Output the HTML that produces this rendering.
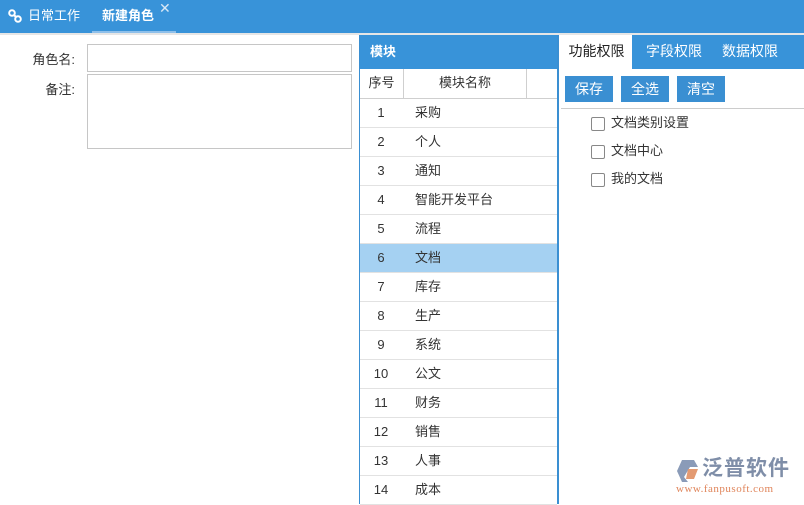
<!DOCTYPE html>
<html><head><meta charset="utf-8"><style>
*{margin:0;padding:0;box-sizing:border-box}
body{width:804px;height:504px;overflow:hidden;background:#fff;font-family:"Liberation Sans","Noto Sans CJK SC",sans-serif;font-size:13px;color:#333;position:relative}
.abs{position:absolute}
.top{left:0;top:0;width:804px;height:33px;background:#3893d9}
.tab{top:0;height:33px;line-height:31px;color:#fff;font-size:13px}
.lbl{width:60px;text-align:right;font-size:13px;color:#333}
.inp{border:1px solid #c6c6c6;background:#fff}
.mid{left:359px;top:35px;width:200px;height:469px;border-left:1px solid #3a8fd2;border-right:2px solid #3a8fd2}
.hdr{background:#3893d9;color:#fff;font-weight:bold;height:34px;line-height:34px}
.row{position:absolute;left:0;width:197px;height:29px;border-bottom:1px solid #e2e2e2;line-height:27px}
.row span{position:absolute}
.n{left:0;width:42px;text-align:center}
.m{left:55px}
.btn{top:76px;height:26px;width:48px;background:#3a8fd2;color:#fff;text-align:center;line-height:26px;font-size:14px}
.cb{left:591px;width:14px;height:14px;border:1px solid #888;border-radius:2px;background:#fff}
.ct{left:611px;font-size:13px;line-height:16px}
</style></head><body>
<div class="abs top"></div>
<svg class="abs" style="left:8px;top:9px" width="14" height="14" viewBox="0 0 14 14"><circle cx="4" cy="4" r="2.8" fill="none" stroke="#fff" stroke-width="2"/><circle cx="10" cy="10" r="2.8" fill="none" stroke="#fff" stroke-width="2"/><line x1="5.5" y1="5.5" x2="8.5" y2="8.5" stroke="#fff" stroke-width="2"/></svg>
<div class="abs tab" style="left:28px">日常工作</div>
<div class="abs tab" style="left:102px;font-weight:bold">新建角色</div>
<div class="abs" style="left:159px;top:1px;color:#d8e8f6;font-size:14px;line-height:14px">✕</div>
<div class="abs" style="left:92px;top:31px;width:84px;height:2px;background:#8fc0ea"></div>
<div class="abs" style="left:0;top:33px;width:804px;height:2px;background:#e6e6e6"></div>

<div class="abs lbl" style="left:15px;top:49px">角色名:</div>
<div class="abs inp" style="left:87px;top:44px;width:265px;height:28px"></div>
<div class="abs lbl" style="left:15px;top:79px">备注:</div>
<div class="abs inp" style="left:87px;top:74px;width:265px;height:75px"></div>

<div class="abs mid">
 <div class="hdr" style="padding-left:10px">模块</div>
 <div style="position:relative;height:30px;border-bottom:1px solid #cfcfcf;line-height:28px">
  <span class="abs" style="left:0;width:44px;text-align:center;border-right:1px solid #cfcfcf;height:29px">序号</span>
  <span class="abs" style="left:44px;width:123px;text-align:center;border-right:1px solid #cfcfcf;height:29px">模块名称</span>
 </div>
 <div style="position:relative">
  <div class="row" style="top:0"><span class="n">1</span><span class="m">采购</span></div>
  <div class="row" style="top:29px"><span class="n">2</span><span class="m">个人</span></div>
  <div class="row" style="top:58px"><span class="n">3</span><span class="m">通知</span></div>
  <div class="row" style="top:87px"><span class="n">4</span><span class="m">智能开发平台</span></div>
  <div class="row" style="top:116px"><span class="n">5</span><span class="m">流程</span></div>
  <div class="row" style="top:145px;background:#a5d1f2"><span class="n">6</span><span class="m">文档</span></div>
  <div class="row" style="top:174px"><span class="n">7</span><span class="m">库存</span></div>
  <div class="row" style="top:203px"><span class="n">8</span><span class="m">生产</span></div>
  <div class="row" style="top:232px"><span class="n">9</span><span class="m">系统</span></div>
  <div class="row" style="top:261px"><span class="n">10</span><span class="m">公文</span></div>
  <div class="row" style="top:290px"><span class="n">11</span><span class="m">财务</span></div>
  <div class="row" style="top:319px"><span class="n">12</span><span class="m">销售</span></div>
  <div class="row" style="top:348px"><span class="n">13</span><span class="m">人事</span></div>
  <div class="row" style="top:377px"><span class="n">14</span><span class="m">成本</span></div>
 </div>
</div>

<div class="abs" style="left:561px;top:35px;width:243px;height:34px;background:#3893d9"></div>
<div class="abs" style="left:561px;top:35px;width:71px;height:35px;background:#fff;text-align:center;line-height:32px;font-size:14px;color:#222">功能权限</div>
<div class="abs" style="left:646px;top:35px;line-height:32px;font-size:14px;color:#fff">字段权限</div>
<div class="abs" style="left:722px;top:35px;line-height:32px;font-size:14px;color:#fff">数据权限</div>
<div class="abs btn" style="left:565px">保存</div>
<div class="abs btn" style="left:621px">全选</div>
<div class="abs btn" style="left:677px">清空</div>
<div class="abs" style="left:561px;top:108px;width:243px;height:1px;background:#ccc"></div>
<div class="abs cb" style="top:117px"></div><div class="abs ct" style="top:115px">文档类别设置</div>
<div class="abs cb" style="top:145px"></div><div class="abs ct" style="top:143px">文档中心</div>
<div class="abs cb" style="top:173px"></div><div class="abs ct" style="top:171px">我的文档</div>

<svg class="abs" style="left:676px;top:459px" width="24" height="24" viewBox="0 0 24 24"><polygon points="6,1 18,1 22,8 14,8 8,18 12,23 6,23 1,12" fill="#8a9bb8"/><path d="M12,10 L22,10 L18,20 L10,20 Z" fill="#e39a72"/></svg>
<div class="abs" style="left:702px;top:457px;font-size:21px;color:#7f8ea8;line-height:24px;letter-spacing:1px;font-weight:600">泛普软件</div>
<div class="abs" style="left:676px;top:483px;font-family:'Liberation Serif',serif;font-size:11px;color:#e0855b;letter-spacing:0.5px">www.fanpusoft.com</div>
</body></html>
